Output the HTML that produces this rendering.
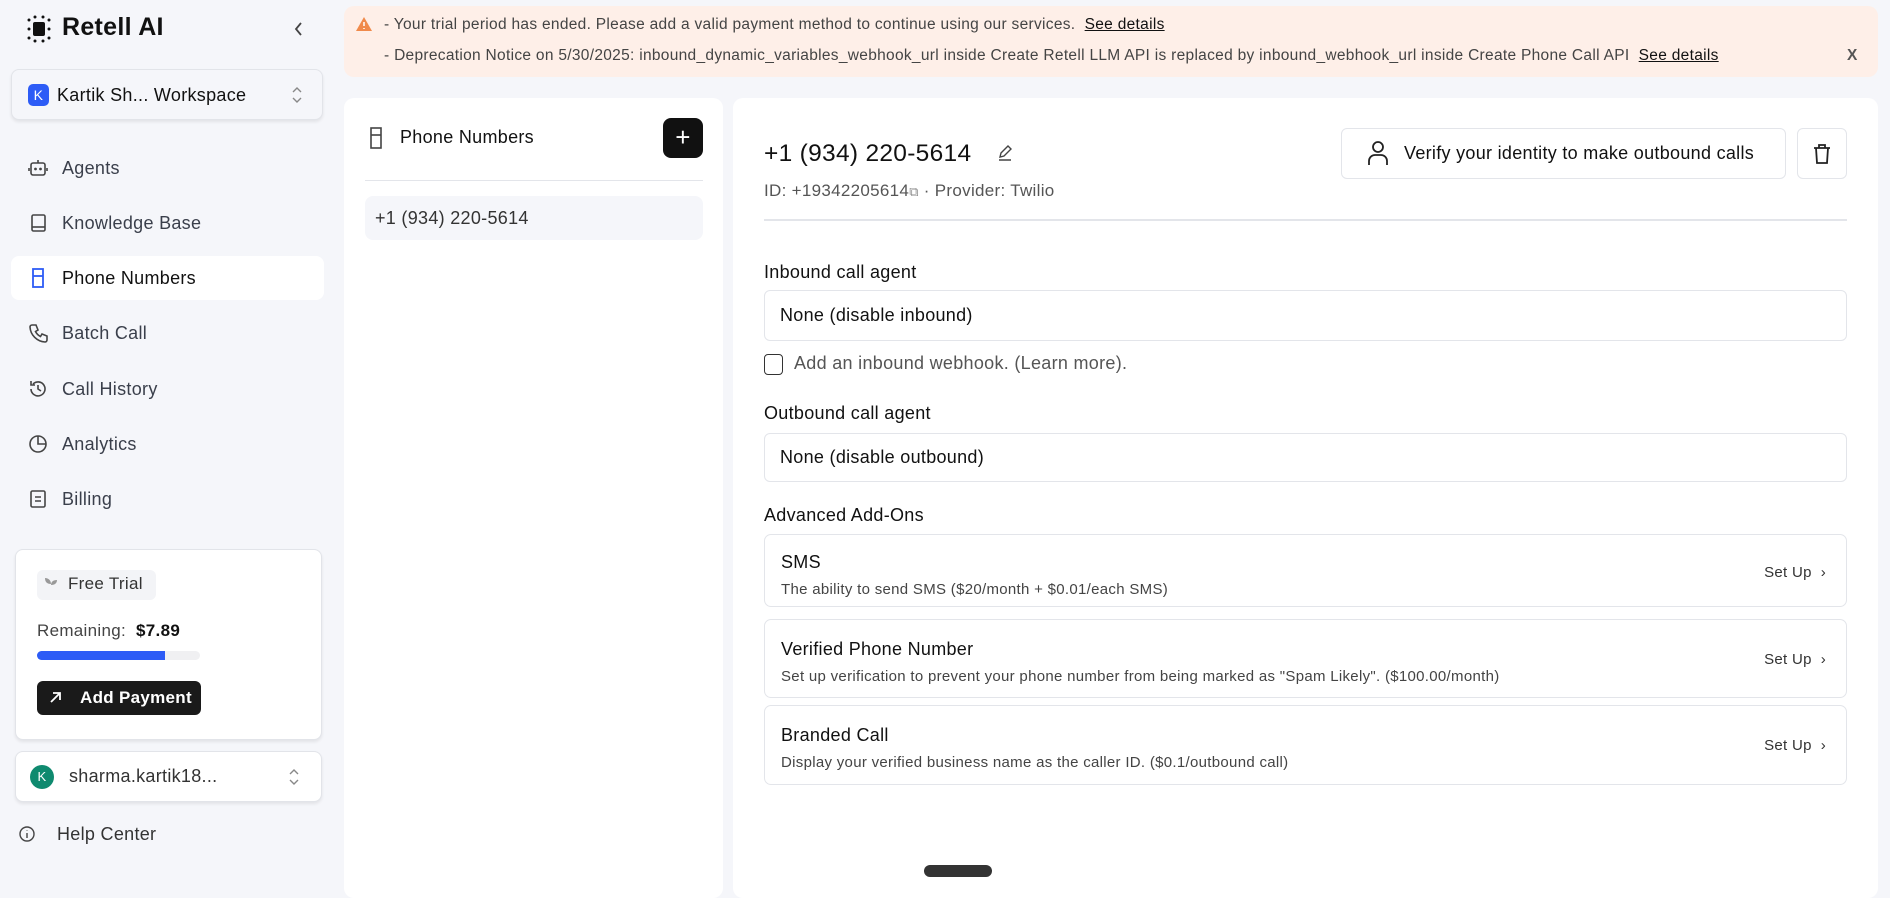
<!DOCTYPE html>
<html><head><meta charset="utf-8"><style>
*{box-sizing:border-box;margin:0;padding:0}
body{width:1890px;height:890px;overflow:hidden;background:#f5f6fa;font-family:"Liberation Sans",sans-serif;color:#111;position:relative;letter-spacing:0.3px}
.a{position:absolute}
.nav{position:absolute;left:62px;font-size:18px;color:#3a3f4b;line-height:22px}
.ni{position:absolute;left:28px;width:20px;height:20px}
.card{position:absolute;background:#fff;border-radius:10px}
.lbl{position:absolute;left:764px;font-size:18px;color:#111}
.sel{position:absolute;left:764px;width:1083px;border:1px solid #e3e5ea;border-radius:6px;font-size:18px;padding-left:15px;display:flex;align-items:center;color:#111}
.add{position:absolute;left:764px;width:1083px;border:1px solid #e3e5ea;border-radius:7px}
.add .t{position:absolute;left:16px;top:17px;font-size:18px;color:#111}
.add .d{position:absolute;left:16px;top:46px;font-size:15px;color:#444}
.add .s{position:absolute;right:20px;top:29px;font-size:15px;color:#333}
.chev{position:absolute;width:10px;height:20px}
</style></head><body>
<svg class="a" style="left:25px;top:15px" width="28" height="28" viewBox="0 0 28 28"><g fill="#111"><rect x="8" y="7" width="12" height="14" rx="2"/><circle cx="4" cy="5" r="1.5"/><circle cx="10" cy="2" r="1.5"/><circle cx="18" cy="2" r="1.5"/><circle cx="24" cy="5" r="1.5"/><circle cx="4" cy="14" r="1.5"/><circle cx="24" cy="14" r="1.5"/><circle cx="4" cy="23" r="1.5"/><circle cx="10" cy="26" r="1.5"/><circle cx="18" cy="26" r="1.5"/><circle cx="24" cy="23" r="1.5"/></g></svg>
<div class="a" style="left:62px;top:13px;font-size:25px;font-weight:bold">Retell AI</div>
<svg class="a" style="left:293px;top:21px" width="10" height="16" viewBox="0 0 10 16" fill="none" stroke="#444" stroke-width="1.8"><path d="M8 2L3 8l5 6"/></svg>
<div class="a" style="left:11px;top:69px;width:312px;height:51px;background:#f5f6fa;border:1px solid #e2e4e9;border-radius:8px;box-shadow:0 2px 3px rgba(0,0,0,.08)">
<div class="a" style="left:16px;top:14px;width:21px;height:22px;background:#2d5cf6;border-radius:5px;color:#fff;font-size:14px;text-align:center;line-height:22px">K</div>
<div class="a" style="left:45px;top:15px;font-size:18px;color:#111">Kartik Sh... Workspace</div>
<svg class="chev" style="left:280px;top:15px" viewBox="0 0 10 20" fill="none" stroke="#888" stroke-width="1.4"><path d="M1 7l4-4 4 4M1 13l4 4 4-4"/></svg></div>

<svg class="ni" style="top:158px" viewBox="0 0 20 20" fill="none" stroke="#444" stroke-width="1.6"><rect x="3" y="5" width="14" height="12" rx="2"/><path d="M10 2v3M1 10v3M19 10v3"/><circle cx="7.5" cy="11" r=".6" fill="#444"/><circle cx="12.5" cy="11" r=".6" fill="#444"/></svg>
<div class="nav" style="top:157px">Agents</div>
<svg class="ni" style="top:213px" viewBox="0 0 20 20" fill="none" stroke="#444" stroke-width="1.6"><rect x="4" y="2" width="13" height="16" rx="1.5"/><path d="M4 14h13"/></svg>
<div class="nav" style="top:212px">Knowledge Base</div>
<div class="a" style="left:11px;top:256px;width:313px;height:44px;background:#fff;border-radius:8px"></div>
<svg class="ni" style="top:268px" viewBox="0 0 20 20" fill="none" stroke="#2d5cf6" stroke-width="1.8"><rect x="5" y="1" width="10" height="18"/><path d="M5 8h10"/></svg>
<div class="nav" style="top:267px;color:#111">Phone Numbers</div>
<svg class="ni" style="top:323px" viewBox="0 0 20 20" fill="none" stroke="#444" stroke-width="1.6"><path d="M4 2h4l2 5-2.5 1.5a11 11 0 0 0 5 5L14 11l5 2v4a2 2 0 0 1-2 2A16 16 0 0 1 2 4a2 2 0 0 1 2-2z"/></svg>
<div class="nav" style="top:322px">Batch Call</div>
<svg class="ni" style="top:379px" viewBox="0 0 20 20" fill="none" stroke="#444" stroke-width="1.6"><path d="M3 10a7 7 0 1 0 2-5M3 2v4h4M10 6v4l3 2"/></svg>
<div class="nav" style="top:378px">Call History</div>
<svg class="ni" style="top:434px" viewBox="0 0 20 20" fill="none" stroke="#444" stroke-width="1.6"><circle cx="10" cy="10" r="8"/><path d="M10 2v8h8"/></svg>
<div class="nav" style="top:433px">Analytics</div>
<svg class="ni" style="top:489px" viewBox="0 0 20 20" fill="none" stroke="#444" stroke-width="1.6"><rect x="3" y="2" width="14" height="16" rx="1.5"/><path d="M7 8h6M7 12h6"/></svg>
<div class="nav" style="top:488px">Billing</div>

<div class="a" style="left:15px;top:549px;width:307px;height:191px;background:#fff;border:1px solid #e2e4e9;border-radius:8px;box-shadow:0 2px 3px rgba(0,0,0,.08)"></div>
<div class="a" style="left:37px;top:570px;width:119px;height:30px;background:#f3f4f7;border-radius:6px"></div>
<svg class="a" style="left:44px;top:576px" width="14" height="16" viewBox="0 0 14 16" fill="#999"><path d="M7 16V8C7 4 4 2 1 2c0 4 2 6 6 6zM7 9c0-3 2-5 6-5 0 3-2 5-6 5z"/></svg>
<div class="a" style="left:68px;top:574px;font-size:17px;color:#333">Free Trial</div>
<div class="a" style="left:37px;top:621px;font-size:17px;color:#444">Remaining:&nbsp; <b style="color:#111">$7.89</b></div>
<div class="a" style="left:37px;top:651px;width:163px;height:9px;background:#f0f0f2;border-radius:5px"><div style="width:128px;height:9px;background:#2d5cf6;border-radius:5px 0 0 5px"></div></div>
<div class="a" style="left:37px;top:681px;width:164px;height:34px;background:#1a1a1a;border-radius:6px;color:#fff;font-size:17px;font-weight:bold;line-height:34px;padding-left:43px">Add Payment</div>
<svg class="a" style="left:49px;top:691px" width="13" height="13" viewBox="0 0 13 13" fill="none" stroke="#fff" stroke-width="1.8"><path d="M2 11L11 2M4 2h7v7"/></svg>
<div class="a" style="left:15px;top:751px;width:307px;height:51px;background:#fff;border:1px solid #e2e4e9;border-radius:8px;box-shadow:0 2px 3px rgba(0,0,0,.08)">
<div class="a" style="left:14px;top:13px;width:24px;height:24px;background:#0f8a6f;border-radius:50%;color:#fff;font-size:13px;text-align:center;line-height:24px">K</div>
<div class="a" style="left:53px;top:14px;font-size:18px;color:#333">sharma.kartik18...</div>
<svg class="chev" style="left:273px;top:15px" viewBox="0 0 10 20" fill="none" stroke="#888" stroke-width="1.4"><path d="M1 7l4-4 4 4M1 13l4 4 4-4"/></svg></div>
<svg class="a" style="left:19px;top:826px" width="16" height="16" viewBox="0 0 16 16" fill="none" stroke="#444" stroke-width="1.4"><circle cx="8" cy="8" r="7"/><path d="M8 7v5M8 4.5v.5"/></svg>
<div class="a" style="left:57px;top:824px;font-size:18px;color:#333">Help Center</div>

<div class="a" style="left:344px;top:6px;width:1534px;height:71px;background:#feefe8;border-radius:10px;font-size:15.5px;color:#444">
<svg class="a" style="left:12px;top:11px" width="16" height="14" viewBox="0 0 16 14"><path d="M8 0L16 14H0z" fill="#f08a4b"/><path d="M8 5v4M8 11v1" stroke="#fff" stroke-width="1.5"/></svg>
<div class="a" style="left:40px;top:10px;white-space:nowrap">- Your trial period has ended. Please add a valid payment method to continue using our services.&nbsp; <u style="color:#111">See details</u></div>
<div class="a" style="left:40px;top:41px;white-space:nowrap">- Deprecation Notice on 5/30/2025: inbound_dynamic_variables_webhook_url inside Create Retell LLM API is replaced by inbound_webhook_url inside Create Phone Call API&nbsp; <u style="color:#111">See details</u></div>
<div class="a" style="left:1503px;top:41px;font-weight:bold;color:#555">X</div></div>

<div class="card" style="left:344px;top:98px;width:379px;height:800px"></div>
<svg class="a" style="left:369px;top:127px" width="14" height="22" viewBox="0 0 14 22" fill="none" stroke="#444" stroke-width="1.6"><rect x="2" y="1" width="10" height="20"/><path d="M2 8h10"/></svg>
<div class="a" style="left:400px;top:127px;font-size:18px;font-weight:500">Phone Numbers</div>
<div class="a" style="left:663px;top:118px;width:40px;height:40px;background:#111;border-radius:8px;color:#fff;font-size:26px;text-align:center;line-height:38px">+</div>
<div class="a" style="left:365px;top:180px;width:338px;height:1px;background:#e3e5ea"></div>
<div class="a" style="left:365px;top:196px;width:338px;height:44px;background:#f5f6fa;border-radius:8px;font-size:18px;color:#333;padding:12px 0 0 10px">+1 (934) 220-5614</div>

<div class="card" style="left:733px;top:98px;width:1145px;height:800px"></div>
<div class="a" style="left:764px;top:140px;font-size:24.5px;color:#111">+1 (934) 220-5614</div>
<svg class="a" style="left:996px;top:144px" width="18" height="18" viewBox="0 0 18 18" fill="none" stroke="#444" stroke-width="1.4"><path d="M4 13l1-4 7-7 3 3-7 7zM3 16h12"/></svg>
<div class="a" style="left:764px;top:181px;font-size:17px;color:#555">ID: +19342205614<span style="font-size:13px;color:#888">⧉</span> · Provider: Twilio</div>
<div class="a" style="left:1341px;top:128px;width:445px;height:51px;border:1px solid #e3e5ea;border-radius:6px;font-size:18px;line-height:49px;padding-left:62px;color:#111">Verify your identity to make outbound calls</div>
<svg class="a" style="left:1367px;top:140px" width="22" height="26" viewBox="0 0 22 26" fill="none" stroke="#222" stroke-width="1.8"><circle cx="11" cy="7" r="5"/><path d="M2 25v-4a6 6 0 0 1 6-6h6a6 6 0 0 1 6 6v4"/></svg>
<div class="a" style="left:1797px;top:128px;width:50px;height:51px;border:1px solid #e3e5ea;border-radius:6px"></div>
<svg class="a" style="left:1812px;top:143px" width="20" height="22" viewBox="0 0 20 22" fill="none" stroke="#222" stroke-width="1.8"><path d="M2 5h16M7 5V2h6v3M4 5l1 15h10l1-15"/></svg>
<div class="a" style="left:764px;top:219px;width:1083px;height:2px;background:#e3e5ea"></div>

<div class="lbl" style="top:262px">Inbound call agent</div>
<div class="sel" style="top:290px;height:51px">None (disable inbound)</div>
<div class="a" style="left:764px;top:354px;width:19px;height:21px;border:1.5px solid #333;border-radius:4px"></div>
<div class="a" style="left:794px;top:353px;font-size:18px;color:#555">Add an inbound webhook. (Learn more).</div>
<div class="lbl" style="top:403px">Outbound call agent</div>
<div class="sel" style="top:433px;height:49px">None (disable outbound)</div>
<div class="lbl" style="top:505px">Advanced Add-Ons</div>

<div class="add" style="top:534px;height:73px"><div class="t">SMS</div><div class="d">The ability to send SMS ($20/month + $0.01/each SMS)</div><div class="s">Set Up &nbsp;›</div></div>
<div class="add" style="top:619px;height:79px"><div class="t" style="top:19px">Verified Phone Number</div><div class="d" style="top:48px">Set up verification to prevent your phone number from being marked as "Spam Likely". ($100.00/month)</div><div class="s" style="top:31px">Set Up &nbsp;›</div></div>
<div class="add" style="top:705px;height:80px"><div class="t" style="top:19px">Branded Call</div><div class="d" style="top:48px">Display your verified business name as the caller ID. ($0.1/outbound call)</div><div class="s" style="top:31px">Set Up &nbsp;›</div></div>
<div class="a" style="left:924px;top:865px;width:68px;height:12px;background:#333;border-radius:6px"></div>
</body></html>
